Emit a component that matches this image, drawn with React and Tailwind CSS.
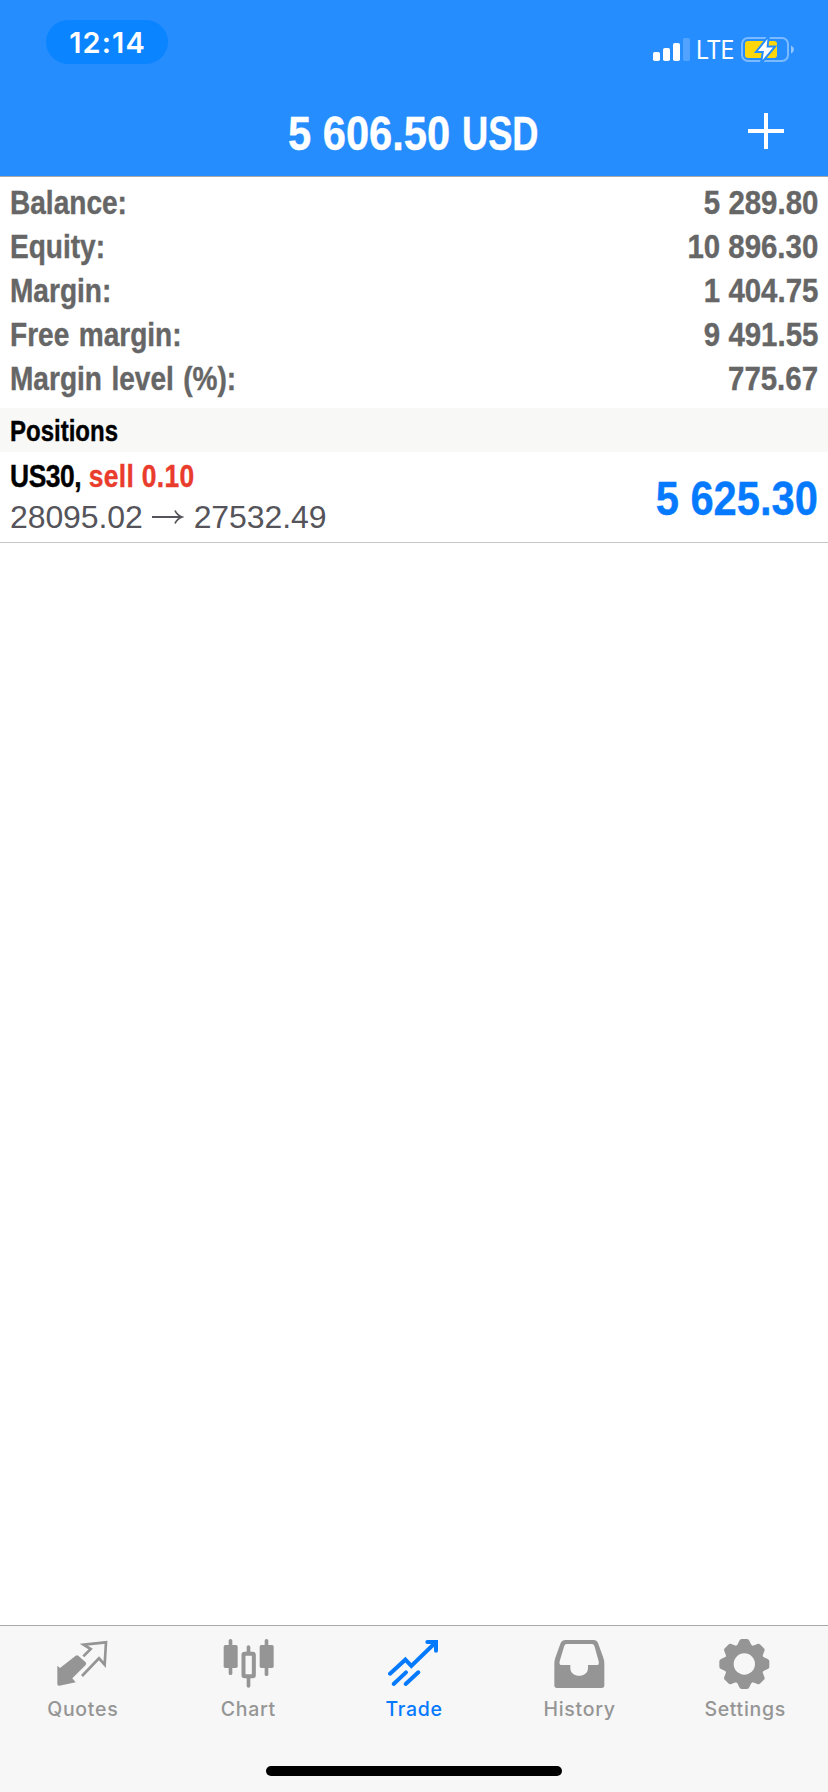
import clsx from 'clsx'

const SUMMARY = [
  { label: 'Balance:', value: '5 289.80' },
  { label: 'Equity:', value: '10 896.30' },
  { label: 'Margin:', value: '1 404.75' },
  { label: 'Free margin:', value: '9 491.55' },
  { label: 'Margin level (%):', value: '775.67' },
]

const TABS = [
  { label: 'Quotes', icon: QuotesIcon },
  { label: 'Chart', icon: ChartIcon },
  { label: 'Trade', icon: TradeIcon, active: true },
  { label: 'History', icon: HistoryIcon },
  { label: 'Settings', icon: SettingsIcon },
]

// Bold sans squeezed horizontally
const CONDENSED = 'whitespace-nowrap font-bold [-webkit-text-stroke:0.4px_currentColor]'

function QuotesIcon() {
  return (
    <svg viewBox="0 0 156 156" className="size-[52px]" fill="currentColor">
      <path d="M1 83l8 7L56 53Q60 50 64 53L86 73Q89 77 86 81L46 121l10 12-49 10Q1 144 1 138z" />
      <path d="M79 55L101 33L80 20L147 13L143 80L126 61L75 114" fill="none" stroke="currentColor" strokeWidth="8" />
    </svg>
  )
}

function ChartIcon() {
  return (
    <svg viewBox="0 0 156 156" className="size-[52px]" fill="currentColor">
      <rect x="20" y="3" width="11" height="108" rx="5.5" />
      <rect x="5" y="21" width="42" height="69" rx="5" />
      <rect x="128" y="3" width="11" height="111" rx="5.5" />
      <rect x="113" y="21" width="42" height="69" rx="5" />
      <path d="M74 45V27a5.500 5.500 0 0 1 11 0v18zM74 118v26a5.500 5.500 0 0 0 11 0v-26z" />
      <rect x="64.500" y="47.500" width="31" height="67" rx="3" fill="none" stroke="currentColor" strokeWidth="12" />
    </svg>
  )
}

function TradeIcon() {
  return (
    <svg viewBox="0 0 156 156" className="size-[52px]" fill="none" stroke="currentColor" strokeWidth="12" strokeLinecap="round">
      <path d="M6 107L52 65L70 84L141 15" />
      <path d="M118 12h26v26" />
      <path d="M17 138L54 103M53 138L91 103" />
    </svg>
  )
}

function HistoryIcon() {
  return (
    <svg viewBox="0 0 156 156" className="size-[52px]" fill="currentColor" fillRule="evenodd">
      <path d="M35 6h84q9 0 13 9l16 44q3 9 3 18v65q0 8-8 8H9q-8 0-8-8V77q0-9 3-18L20 15q4-9 15-9zM38 18q-5 0-7 5L17 70q-2 11 4 11h28v9c0 31 53 31 53 0v-9h28q6 0 4-11L121 23q-2-5-7-5z" />
    </svg>
  )
}

function SettingsIcon() {
  return (
    <svg viewBox="0 0 156 156" className="size-[52px]" fill="currentColor">
      {[0, 45, 90, 135].map(a => (
        <path key={a} d="M68 3h16q5 0 7 5l5 11q2 5 7 6v106q-5 1-7 6l-5 11q-2 5-7 5H68q-5 0-7-5l-5-11q-2-5-7-6V25q5-1 7-6l5-11q2-5 7-5z" transform={`rotate(${a} 76 78)`} />
      ))}
      <circle cx="76" cy="78" r="32" className="fill-[#f7f7f7]" />
    </svg>
  )
}

function SignalIcon() {
  return (
    <svg viewBox="0 0 37 24" className="h-6 w-[37px]" fill="white">
      <rect y="14" width="7" height="9" rx="1.800" />
      <rect x="10" y="10" width="7" height="13" rx="1.800" />
      <rect x="20" y="5" width="7" height="18" rx="1.800" />
      <rect x="30" width="7" height="23" rx="1.800" opacity=".2" />
    </svg>
  )
}

function BatteryIcon() {
  return (
    <svg viewBox="0 0 54 26" className="h-[26px] w-[54px]">
      <rect x="1" y="1" width="46" height="23" rx="6" fill="none" stroke="white" strokeOpacity=".4" strokeWidth="2" />
      <path d="M50 8.500q3 1.500 3 4t-3 4z" fill="white" fillOpacity=".5" />
      <rect x="4" y="4" width="32" height="17" rx="3" className="fill-[#ffd60a]" />
      <path d="M26.500 2L17 14h6L21.500 23 32 10.500h-6.500z" fill="white" className="stroke-[#268dff]" strokeWidth="4" paintOrder="stroke" />
    </svg>
  )
}

export default function App() {
  return (
    <div className="flex h-[1792px] w-[828px] flex-col bg-white font-['Liberation_Sans',sans-serif]">
      {/* Status bar + account total */}
      <header className="flex h-[177px] flex-col border-b border-[#a9a9a9] bg-[#268dff] text-white">
        <div className="flex h-[88px] items-start justify-between pl-[46px] pr-[33px] pt-5 font-['Inter',sans-serif]">
          <div className="flex h-11 w-[122px] items-center justify-center rounded-full bg-[#0a84ff] pl-px pt-[2px] text-[29px] font-semibold tracking-[1.1px]">
            12:14
          </div>
          <div className="flex items-center pt-[17px]">
            <SignalIcon />
            <span className="ml-[6px] w-[39px] origin-left scale-x-[0.93] text-[25px] leading-[26px] tracking-[-0.8px]">LTE</span>
            <span className="ml-[6px]"><BatteryIcon /></span>
          </div>
        </div>
        <div className="grid h-[88px] grid-cols-[1fr_auto_1fr] items-center text-[48px]">
          <h1 className={clsx('col-start-2 flex w-[253px] pt-1', CONDENSED)}>
            <span className="w-[174px] origin-left scale-x-[0.868]">5 606.50</span>
            <span className="w-[79px] origin-left scale-x-[0.755]">USD</span>
          </h1>
          <button className="justify-self-end pb-[2px] pr-[44px]" aria-label="New order">
            <svg viewBox="0 0 36 36" className="size-9" stroke="white" strokeWidth="4">
              <path d="M18 0v36M0 18h36" />
            </svg>
          </button>
        </div>
      </header>

      {/* Account summary */}
      <dl className="h-[231px] px-[10px] pt-[3px] text-[34px] leading-[44px] text-[#666]">
        {SUMMARY.map(({ label, value }) => (
          <div key={label} className="flex justify-between">
            <dt className={clsx('origin-left scale-x-[0.825] [word-spacing:2px]', CONDENSED)}>{label}</dt>
            <dd className={clsx('origin-right scale-x-[0.865]', CONDENSED)}>{value}</dd>
          </div>
        ))}
      </dl>

      {/* Open positions */}
      <div className="h-11 bg-[#f8f8f7] px-[10px] text-[30px] leading-[45px] text-black">
        <h2 className={clsx('origin-left scale-x-[0.8]', CONDENSED)}>Positions</h2>
      </div>
      <div className="flex h-[91px] items-center justify-between border-b border-[#c6c6c8] px-[10px]">
        <div className="pb-[3px]">
          <p className={clsx('origin-left scale-x-[0.852] text-[31px] leading-[42px]', CONDENSED)}>
            <span className="tracking-[-0.5px]">US30,</span>{' '}
            <span className="tracking-[0.4px] text-[#e93c2c]">sell 0.10</span>
          </p>
          <p className="flex items-center text-[32px] leading-[38px] tracking-[-0.1px] text-[#55545a]">
            28095.02
            <svg viewBox="0 0 32 16" className="mx-[9.5px] h-4 w-8" fill="none" stroke="currentColor" strokeWidth="1.8">
              <path d="M0 8h30M23 1.500q2 4.500 7 6.500-5 2-7 6.500" />
            </svg>
            27532.49
          </p>
        </div>
        <span className={clsx('origin-right scale-x-[0.868] pt-[3px] text-[48px] text-[#067aff]', CONDENSED)}>5 625.30</span>
      </div>

      {/* Tab bar */}
      <nav className="mt-auto flex h-[167px] flex-col justify-between border-t border-[#a9a9a9] bg-[#f7f7f7]">
        <div className="grid grid-cols-5 pt-3">
          {TABS.map(({ label, icon: Icon, active }) => (
            <button
              key={label}
              className={clsx(
                "flex flex-col items-center font-['Inter',sans-serif] text-[19.5px] font-medium tracking-[0.7px]",
                active ? 'text-[#067aff]' : 'text-[#959595]'
              )}
            >
              <Icon />
              <span className="mt-[5px] leading-[28px]">{label}</span>
            </button>
          ))}
        </div>
        <div className="mb-4 h-[10px] w-[296px] self-center rounded-full bg-black" />
      </nav>
    </div>
  )
}
